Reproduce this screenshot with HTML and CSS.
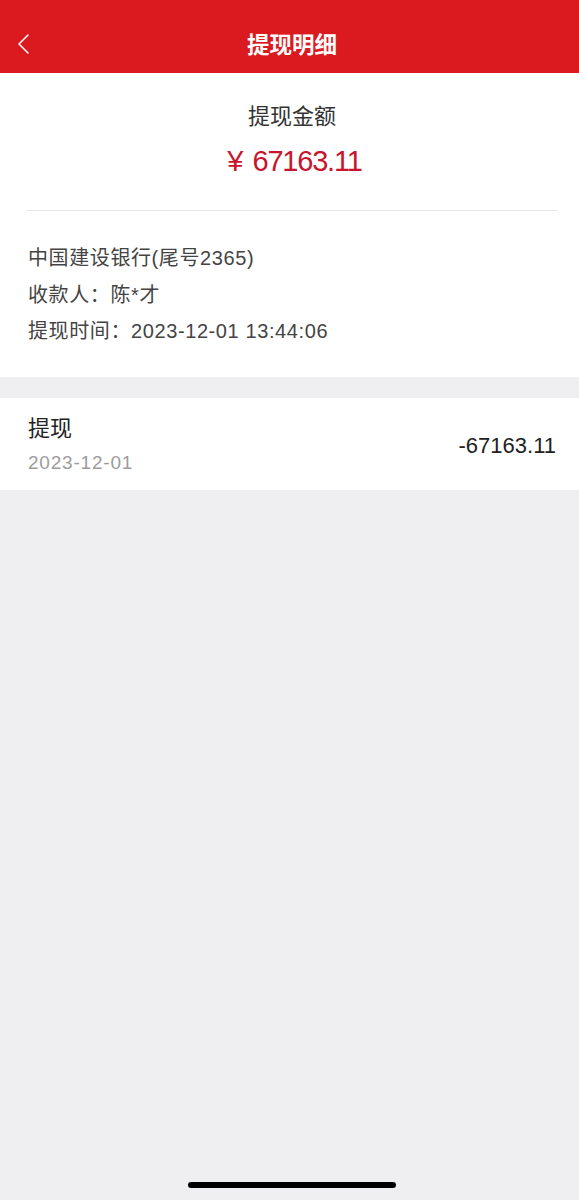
FILE: index.html
```html
<!DOCTYPE html>
<html lang="zh-CN">
<head>
  <meta charset="UTF-8" />
  <meta name="viewport" content="width=device-width, initial-scale=1.0"/>
  <title>提现明细</title>
  <link rel="stylesheet" href="styles.css">
</head>
<body>

  <!-- Nav Bar -->
  <div class="nav-bar">
    <span class="nav-back">
      <svg width="12" height="20" viewBox="0 0 12 20"><polyline points="11,1 2,10 11,19" fill="none" stroke="#fff" stroke-width="1.5" stroke-linecap="round" stroke-linejoin="round"/></svg>
    </span>
    <span class="nav-title">提现明细</span>
  </div>

  <!-- Summary -->
  <div class="summary">
    <div class="summary-label">提现金额</div>
    <div class="summary-amount"><span class="yen">¥</span>67163.11</div>
    <div class="divider"></div>
    <div class="info">
      <div class="info-line">中国建设银行(尾号2365)</div>
      <div class="info-line">收款人：陈*才</div>
      <div class="info-line">提现时间：2023-12-01 13:44:06</div>
    </div>
  </div>

  <!-- Record -->
  <div class="record">
    <div class="record-main">
      <div class="record-name">提现</div>
      <div class="record-date">2023-12-01</div>
    </div>
    <div class="record-amount">-67163.11</div>
  </div>

  <div class="home-indicator"></div>
</body>
</html>
```

FILE: styles.css
```css
body {
  margin: 0;
  padding: 0;
  min-height: 1200px;
  background: #efeff2;
  font-family: 'Liberation Sans', 'Noto Sans CJK SC', sans-serif;
  color: #333;
  position: relative;
}

.nav-bar {
  height: 73px;
  background: #da1a1f;
  display: flex;
  align-items: center;
  justify-content: center;
  position: relative;
}

.nav-back {
  position: absolute;
  left: 17px;
  top: 34px;
  display: flex;
}

.nav-title {
  color: #fff;
  font-size: 22.5px;
  font-weight: bold;
  margin: 13px 0 0 5px;
  font-family: 'Noto Sans CJK SC', sans-serif;
}

.summary {
  background: #fff;
  padding: 29px 0 27px;
}

.summary-label {
  text-align: center;
  font-size: 22px;
  line-height: 30px;
  padding-left: 5px;
  color: #333;
}

.summary-amount {
  text-align: center;
  font-size: 29px;
  line-height: 40px;
  margin-top: 9px;
  padding-left: 10px;
  letter-spacing: -1.2px;
  color: #c8152d;
}

.yen {
  letter-spacing: 0;
  margin-right: 9px;
}

.divider {
  height: 1px;
  background: #e8e8e8;
  margin: 29px 22px 0 27px;
}

.info {
  padding: 29px 27px 0 28px;
}

.info-line {
  font-size: 20px;
  line-height: 36.5px;
  color: #444;
  letter-spacing: 0.6px;
}

.record {
  margin-top: 21px;
  background: #fff;
  height: 92px;
  box-sizing: border-box;
  padding: 16px 23px 14px 28px;
  display: flex;
  align-items: center;
  justify-content: space-between;
}

.record-main {
  align-self: flex-start;
}

.record-name {
  font-size: 22px;
  line-height: 30px;
  color: #222;
}

.record-date {
  font-size: 19px;
  line-height: 26px;
  margin-top: 6px;
  letter-spacing: 0.8px;
  color: #9c9c9c;
}

.record-amount {
  font-size: 22px;
  color: #222;
  padding-top: 2px;
}

.home-indicator {
  position: absolute;
  left: 188px;
  top: 1182px;
  width: 208px;
  height: 6px;
  border-radius: 3px;
  background: #000;
}
```
